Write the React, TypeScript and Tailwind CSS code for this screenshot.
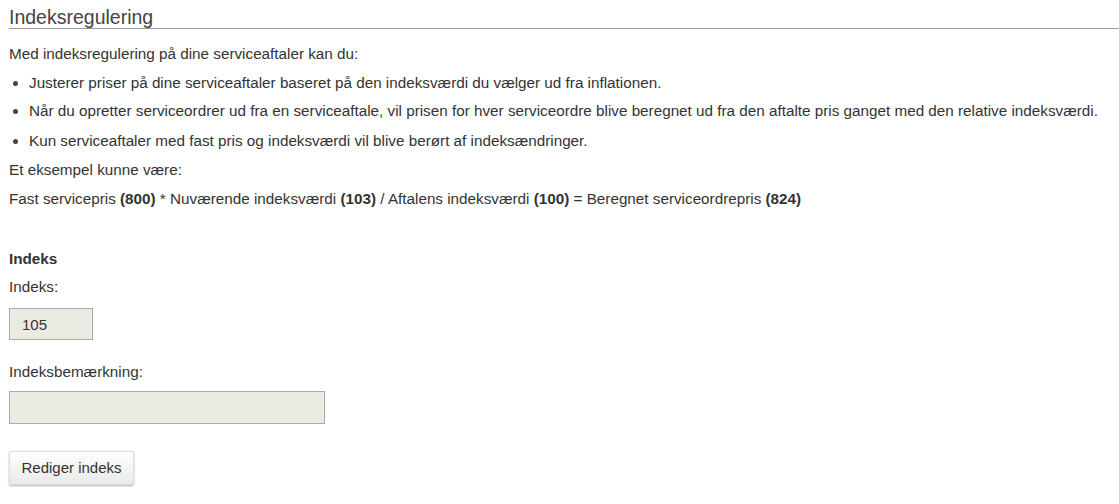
export default function App() {
  const bullets = [
    'Justerer priser på dine serviceaftaler baseret på den indeksværdi du vælger ud fra inflationen.',
    'Når du opretter serviceordrer ud fra en serviceaftale, vil prisen for hver serviceordre blive beregnet ud fra den aftalte pris ganget med den relative indeksværdi.',
    'Kun serviceaftaler med fast pris og indeksværdi vil blive berørt af indeksændringer.',
  ];

  return (
    <div className="min-h-screen bg-white pl-[9px] text-[15.25px] text-[#333] font-['Liberation_Sans',Arial,sans-serif]">
      <h2 className="pt-[6px] text-[19.5px] leading-[22px] text-[#444] border-b border-[#999]">Indeksregulering</h2>

      <p className="mt-[15px] leading-[20px]">Med indeksregulering på dine serviceaftaler kan du:</p>

      <ul className="mt-[9px]">
        {bullets.map((b, i) => (
          <li key={i} className={`flex items-center leading-[20px] ${i === 0 ? 'mb-[8px]' : 'mb-[10px]'}`}>
            <span className="ml-[4px] mr-[11px] h-[5px] w-[5px] shrink-0 rounded-full bg-[#444]" />
            {b}
          </li>
        ))}
      </ul>

      <p className="-mt-[1px] leading-[20px]">Et eksempel kunne være:</p>
      <p className="mt-[9px] leading-[20px]">
        Fast servicepris <b>(800)</b> * Nuværende indeksværdi <b>(103)</b> / Aftalens indeksværdi <b>(100)</b> = Beregnet serviceordrepris <b>(824)</b>
      </p>

      <h3 className="mt-[40px] font-bold leading-[20px]">Indeks</h3>
      <label className="mt-[8px] block leading-[20px]">Indeks:</label>
      <input
        disabled
        value="105"
        className="mt-[11px] block h-[32px] w-[84px] border border-[#aaa] bg-[#ebebe4] px-[12px] text-[15px] text-[#333]"
      />

      <label className="mt-[22px] block leading-[20px]">Indeksbemærkning:</label>
      <input
        disabled
        className="mt-[9px] block h-[33px] w-[316px] border border-[#aaa] bg-[#ebebe4] px-[12px]"
      />

      <button className="mt-[27px] h-[34px] w-[125px] rounded-[2px] border border-[#ddd] bg-gradient-to-b from-white to-[#e9e9e9] text-[15px] text-[#333] shadow-[0_1px_2px_rgba(0,0,0,0.3)]">
        Rediger indeks
      </button>
    </div>
  );
}
